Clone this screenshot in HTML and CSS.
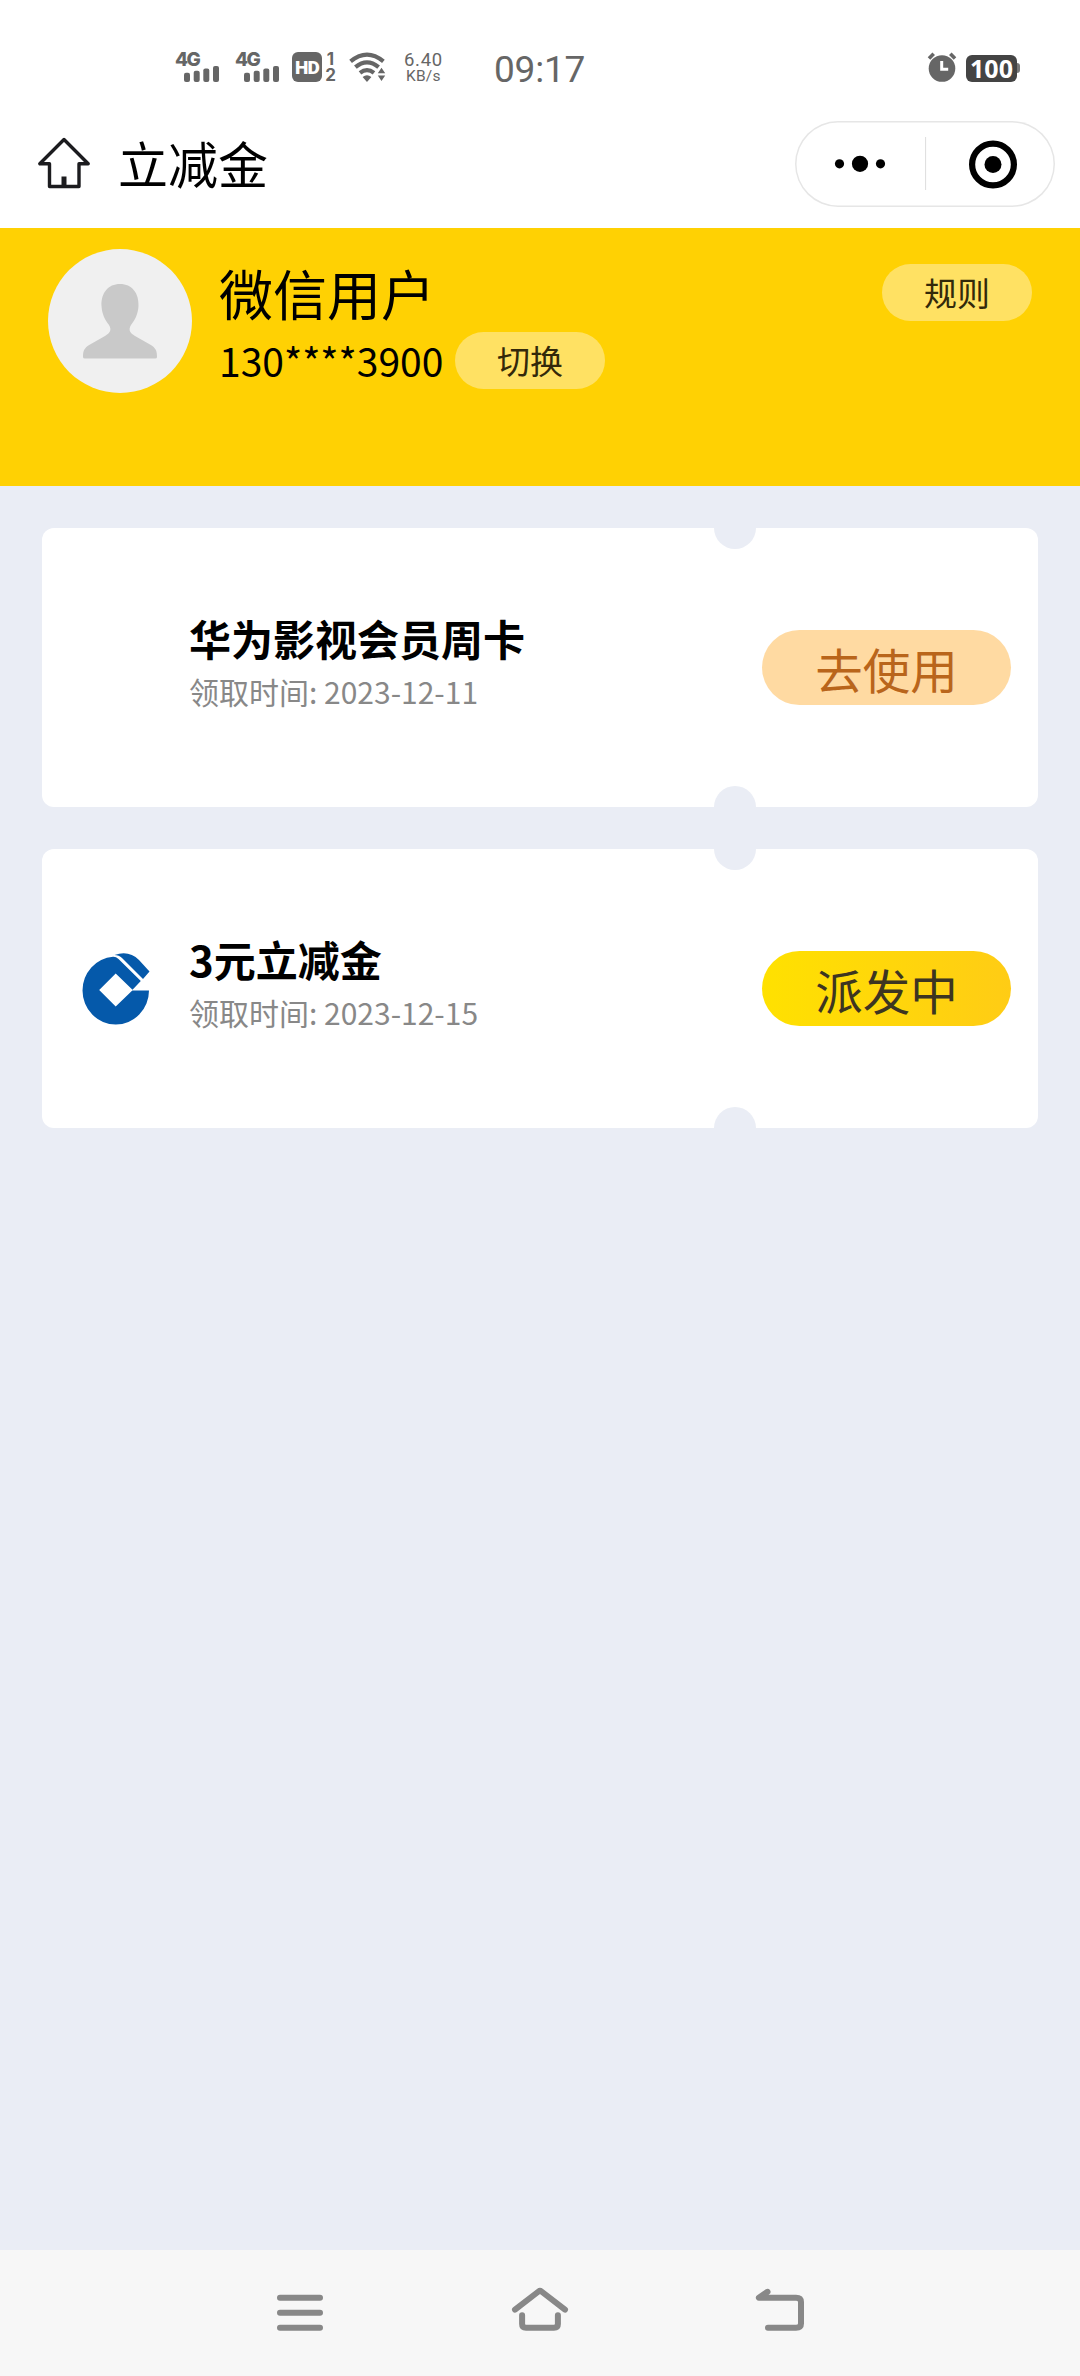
FILE: index.html
```html
<!DOCTYPE html>
<html lang="zh-CN">
<head>
<meta charset="utf-8">
<title>立减金</title>
<link rel="stylesheet" href="styles.css">
</head>
<body>
<div class="screen">
  <div class="status">
    <div class="signal">
      <span class="net">4G</span>
      <svg class="bars" viewBox="0 0 35 16"><rect x="0" y="6.7" width="6" height="9.3" rx="2"/><rect x="9.7" y="4.7" width="6" height="11.3" rx="2"/><rect x="19.3" y="2.5" width="6" height="13.5" rx="2"/><rect x="29" y="0" width="6" height="16" rx="2"/></svg>
    </div>
    <div class="signal">
      <span class="net">4G</span>
      <svg class="bars" viewBox="0 0 35 16"><rect x="0" y="6.7" width="6" height="9.3" rx="2"/><rect x="9.7" y="4.7" width="6" height="11.3" rx="2"/><rect x="19.3" y="2.5" width="6" height="13.5" rx="2"/><rect x="29" y="0" width="6" height="16" rx="2"/></svg>
    </div>
    <span class="hd">HD</span>
    <div class="sims"><span>1</span><span>2</span></div>
    <svg class="wifi" viewBox="0 0 37 30">
      <g fill="none" stroke="#666" stroke-width="4.2"><path d="M1.6 9.3Q18 -4.2 34.4 9.3"/><path d="M6.4 15.2Q18 5.6 29.6 15.2"/><path d="M11 20.8Q18 15.4 25 20.8"/></g>
      <path fill="#666" d="M13.6 25Q18 21.6 22.4 25L18 30ZM32.5 15.8l3.7 5.4h-7.4ZM32.5 29l3.7-5.4h-7.4Z"/>
    </svg>
    <div class="speed"><span class="rate">6.40</span><span class="unit">KB/s</span></div>
    <time class="clock">09:17</time>
    <svg class="alarm" viewBox="0 0 30 30">
      <circle cx="15" cy="16.5" r="13.3" fill="#666"/><path d="M2 6.5l4.7-4.7M28 6.5l-4.7-4.7" stroke="#666" stroke-width="3.6"/><path d="M14.7 9v8.2h6.5" fill="none" stroke="#fff" stroke-width="3"/>
    </svg>
    <span class="battery">100</span><i class="nub"></i>
  </div>

  <header class="titlebar">
    <svg class="home" viewBox="0 0 52 52"><path d="M26 2.5L1.8 26.7H11.5V49.5H41V26.7H50.2Z" fill="none" stroke="#1c1c1f" stroke-width="3.4" stroke-linejoin="round"/><path d="M23.5 49v-9.5h5V49Z" fill="#1c1c1f"/></svg>
    <h1 class="title">立减金</h1>
    <div class="capsule">
      <svg viewBox="0 0 260 86"><circle cx="44.5" cy="42.8" r="4.6"/><circle cx="65" cy="42.8" r="8.1"/><circle cx="85.5" cy="42.8" r="4.6"/><path d="M130.6 16v53" stroke="#ddd"/><circle cx="198" cy="43.5" r="20.9" fill="none" stroke="#000" stroke-width="6.2"/><circle cx="198" cy="43.5" r="8.5"/></svg>
    </div>
  </header>

  <section class="profile">
    <svg class="avatar" viewBox="0 0 144 144"><circle cx="72" cy="72" r="72" fill="#f0f0f0"/><path fill="#c9c9c9" d="M72 35C60 35 53 44 53.500 57C54 65 57 71 61 76C64 81 62 84 57 87L42 95.500C36 99 35 102 35 108Q35 109.500 37 109.500H107Q109 109.500 109 108C109 102 108 99 102 95.500L87 87C82 84 80 81 83 76C87 71 90 65 90.500 57C91 44 84 35 72 35Z"/></svg>
    <div class="who">
      <div class="name">微信用户</div>
      <div class="phone-row"><span class="phone">130****3900</span><span class="chip">切换</span></div>
    </div>
    <span class="chip rules">规则</span>
  </section>

  <main class="list">
    <article class="coupon">
      <div class="logo"></div>
      <div class="info"><h2>华为影视会员周卡</h2><p>领取时间: 2023-12-11</p></div>
      <span class="action use">去使用</span>
    </article>
    <article class="coupon">
      <div class="logo">
        <svg viewBox="0 0 68 72"><path fill="#0559aa" d="M0.500 37.500A33 34 0 0 1 31 3.700Q34 3.500 36.500 6L58.800 28L50.500 36.800L33.700 20.500L17.200 37L33.700 53.500L50.300 37.500H67A33.200 34 0 0 1 0.500 37.500ZM32.500 2Q47-3 57 7L67.500 18.500L61 26L40 5Q37 2 32.500 2Z"/></svg>
      </div>
      <div class="info"><h2>3元立减金</h2><p>领取时间: 2023-12-15</p></div>
      <span class="action sending">派发中</span>
    </article>
  </main>

  <nav class="navbar">
    <svg viewBox="0 0 60 60"><path d="M10 17.700h40M10 32.700h40M10 47.700h40"/></svg>
    <svg viewBox="0 0 60 60"><path d="M5 29.700L28.500 11.500Q30 10.300 31.500 11.500L55 29.700M12.100 35.200V44Q12.100 47.700 16 47.700H44Q47.900 47.700 47.900 44V35.200"/></svg>
    <svg viewBox="0 0 60 60"><path d="M17.500 11.800L8.900 17.700H46Q51 17.700 51 22V43.500Q51 47.700 46 47.700H18"/></svg>
  </nav>
</div>
</body>
</html>
```
FILE: styles.css
```css
* { box-sizing: border-box; }
body { margin: 0; font-family: "Noto Sans CJK SC", sans-serif; color: #000; }
svg { display: block; overflow: visible; }
h1, h2, p { margin: 0; font-weight: 400; }
.screen { width: 1080px; height: 2376px; display: flex; flex-direction: column; background: #eaedf5; }

.status { height: 110px; padding: 52px 60px 0 175px; display: flex; align-items: flex-start; background: #fff; color: #666; font-family: Roboto, sans-serif; }
.signal { width: 60px; height: 30px; }
.net { display: block; font: 800 19px/16px Inter, sans-serif; letter-spacing: -1.5px; height: 14px; }
.bars { width: 35px; height: 16px; margin-left: 9px; fill: #666; }
.hd { width: 30px; height: 30px; margin-left: -3px; border-radius: 6px; background: #666; color: #fff; font: 900 19px/31px Roboto, sans-serif; letter-spacing: -.8px; text-align: center; }
.sims { display: flex; flex-direction: column; gap: 2px; width: 15px; margin-left: 1px; font: 700 17px/14px Inter, sans-serif; text-align: center; }
.wifi { width: 37px; height: 30px; margin-left: 11px; }
.speed { width: 40px; margin-left: 18px; display: flex; flex-direction: column; white-space: nowrap; }
.rate { font-size: 18.500px; line-height: 16px; letter-spacing: .7px; }
.unit { font-size: 15.500px; line-height: 17px; padding-left: 2px; letter-spacing: .2px; }
.clock { margin-left: 50px; font-size: 37px; line-height: 35px; letter-spacing: -.2px; }
.alarm { width: 30px; height: 30px; margin-left: auto; }
.battery { width: 51px; height: 27px; margin: 3px 0 0 9px; border-radius: 6px; background: #444; color: #fff; font: 700 25px/26px "Open Sans", sans-serif; text-align: center; }
.nub { width: 3px; height: 10px; margin-top: 11px; border-radius: 0 4px 4px 0; background: #777; }

.titlebar { height: 118px; padding: 11px 25px 0 38px; display: flex; align-items: flex-start; background: #fff; }
.home { width: 52px; height: 52px; margin-top: 16px; }
.title { margin-left: 28px; margin-top: 5px; font-size: 50px; line-height: 72px; }
.capsule { width: 260px; height: 86px; margin-left: auto; border-radius: 43px; box-shadow: inset 0 0 0 1.500px #e6e6e6; }

.profile { height: 258px; padding: 21px 48px 0; display: flex; align-items: flex-start; background: #ffd103; }
.avatar { width: 144px; height: 144px; }
.who { margin-left: 27px; }
.name { margin-top: 4px; font-size: 54px; line-height: 79px; }
.phone-row { display: flex; align-items: center; height: 57px; }
.phone { width: 236px; font-size: 39px; line-height: 57px; }
.chip { width: 150px; height: 57px; border-radius: 29px; background: #ffe163; color: #33290a; font-size: 33px; line-height: 57px; text-align: center; }
.rules { margin: 15px 0 0 auto; }

.list { flex: 1; padding: 42px; display: flex; flex-direction: column; gap: 42px; }
.coupon { position: relative; height: 279px; padding: 0 27px 0 40px; display: flex; align-items: center; border-radius: 12px; background: #fff; }
.coupon::before, .coupon::after { content: ""; position: absolute; left: 672px; width: 42px; height: 21px; background: #eaedf5; }
.coupon::before { top: 0; border-radius: 0 0 21px 21px; }
.coupon::after { bottom: 0; border-radius: 21px 21px 0 0; }
.logo { width: 68px; height: 72px; }
.info { margin-left: 39px; margin-bottom: 15px; }
.info h2 { font-size: 42px; line-height: 62px; font-weight: 700; }
.info p { font-size: 30px; line-height: 44px; color: #888; }
.action { width: 249px; height: 75px; margin-left: auto; border-radius: 38px; font-size: 47.500px; line-height: 77px; text-align: center; }
.use { background: #ffdaa2; color: #b9651b; }
.sending { background: linear-gradient(90deg, #ffe100, #ffcc15); color: #3d3521; }

.navbar { height: 126px; padding: 30px 270px 0; display: flex; justify-content: space-between; background: #f7f7f7; }
.navbar svg { width: 60px; height: 60px; fill: none; stroke: #888; stroke-width: 6; stroke-linecap: round; stroke-linejoin: round; }
```
